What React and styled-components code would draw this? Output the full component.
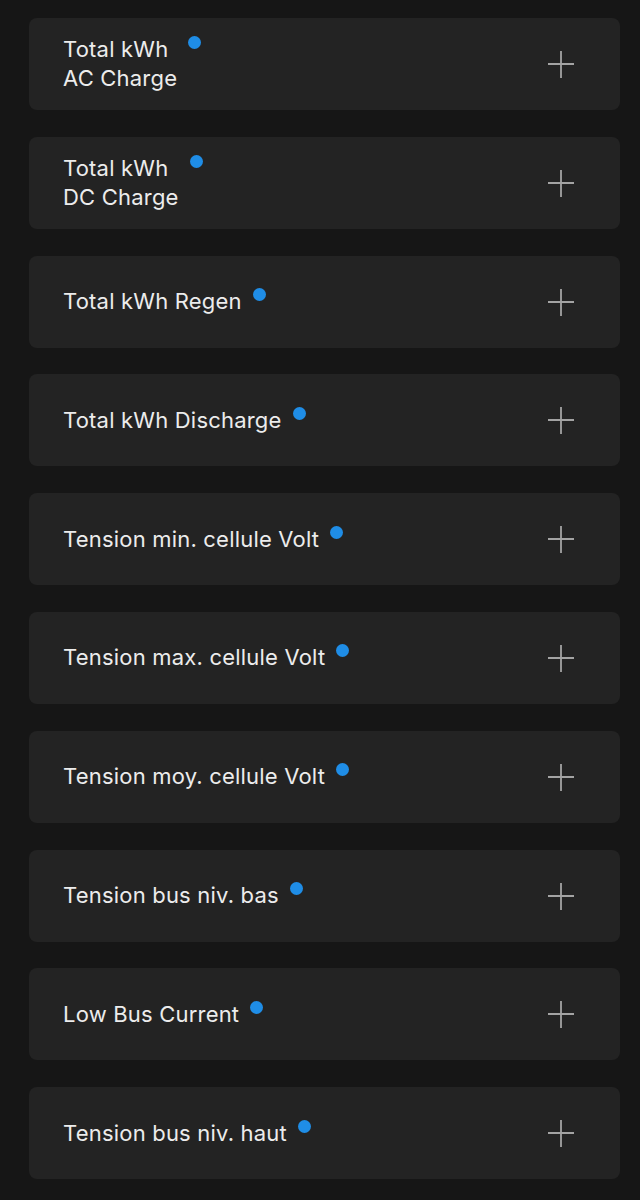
import React from "react";
import styled, { createGlobalStyle } from "styled-components";

const Global = createGlobalStyle`
  html, body {
    margin: 0;
    padding: 0;
    background: #161616;
  }
  body {
    font-family: Inter, "Noto Sans", "Liberation Sans", sans-serif;
    -webkit-font-smoothing: antialiased;
  }
`;

const List = styled.div`
  display: flex;
  flex-direction: column;
  gap: 26.8px;
  padding: 18px 20px 24px 29px;
  min-height: 1200px;
  box-sizing: border-box;
  background: #161616;
`;

const Card = styled.div`
  height: 92px;
  box-sizing: border-box;
  background: #232323;
  border-radius: 8px;
  display: flex;
  align-items: center;
  justify-content: space-between;
  padding: 0 45px 0 34px;
`;

const LabelWrap = styled.div`
  display: flex;
  align-items: flex-start;
  gap: 11px;
`;

const Label = styled.div`
  color: #ececec;
  font-size: 22px;
  line-height: 29px;
  font-weight: 400;
  letter-spacing: 0.2px;
`;

const Dot = styled.span`
  width: 13px;
  height: 13px;
  border-radius: 50%;
  background: #1f8de6;
  margin-top: 1px;
  flex: none;
`;

const PlusButton = styled.button`
  width: 28px;
  height: 28px;
  padding: 0;
  border: none;
  background: transparent;
  display: flex;
  align-items: center;
  justify-content: center;
  cursor: pointer;
`;

const Plus = () => (
  <svg width="28" height="28" viewBox="0 0 28 28" fill="none">
    <path d="M14 1v27M1 14h26" stroke="#a3a3a3" strokeWidth="1.8" />
  </svg>
);

const items = [
  ["Total kWh", "AC Charge"],
  ["Total kWh", "DC Charge"],
  ["Total kWh Regen"],
  ["Total kWh Discharge"],
  ["Tension min. cellule Volt"],
  ["Tension max. cellule Volt"],
  ["Tension moy. cellule Volt"],
  ["Tension bus niv. bas"],
  ["Low Bus Current"],
  ["Tension bus niv. haut"],
];

export default function App() {
  return (
    <>
      <Global />
      <List>
        {items.map((lines, i) => (
          <Card key={i}>
            <LabelWrap>
              <Label>
                {lines.map((l, j) => (
                  <div key={j}>{l}</div>
                ))}
              </Label>
              <Dot />
            </LabelWrap>
            <PlusButton aria-label="Ajouter">
              <Plus />
            </PlusButton>
          </Card>
        ))}
      </List>
    </>
  );
}
